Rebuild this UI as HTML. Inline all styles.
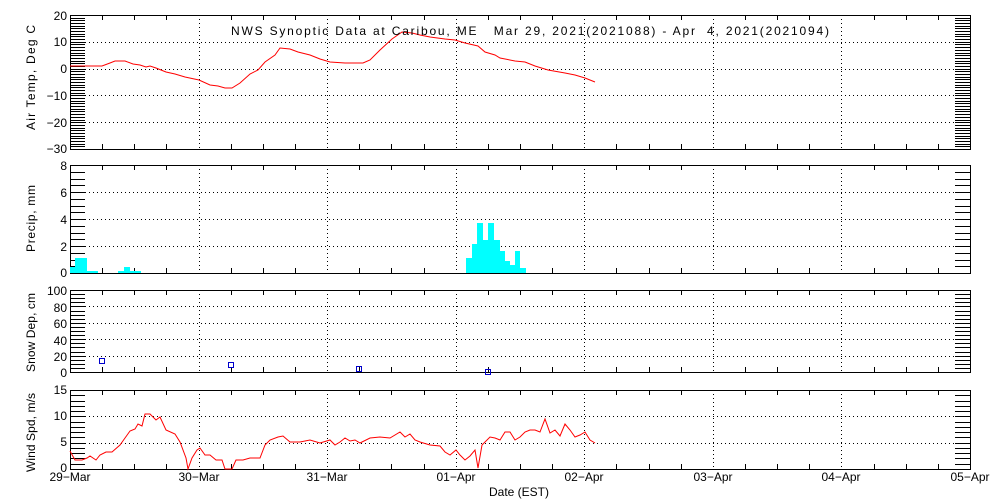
<!DOCTYPE html>
<html><head><meta charset="utf-8"><style>
html,body{margin:0;padding:0;background:#fff;width:1000px;height:500px;overflow:hidden}
svg text{font-family:"Liberation Sans",sans-serif;font-size:12px;fill:#000;white-space:pre}
</style></head><body>
<svg id="s" width="1000" height="500" xmlns="http://www.w3.org/2000/svg" shape-rendering="crispEdges">
<g id="g"></g>
<text x="231" y="35" font-size="13" textLength="598" lengthAdjust="spacing" xml:space="preserve">NWS Synoptic Data at Caribou, ME   Mar 29, 2021(2021088) - Apr  4, 2021(2021094)</text>
<text x="67" y="20" text-anchor="end">20</text>
<text x="67" y="46" text-anchor="end">10</text>
<text x="67" y="73" text-anchor="end">0</text>
<text x="67" y="100" text-anchor="end">−10</text>
<text x="67" y="127" text-anchor="end">−20</text>
<text x="67" y="153" text-anchor="end">−30</text>
<text x="67" y="170" text-anchor="end">8</text>
<text x="67" y="197" text-anchor="end">6</text>
<text x="67" y="224" text-anchor="end">4</text>
<text x="67" y="251" text-anchor="end">2</text>
<text x="67" y="277" text-anchor="end">0</text>
<text x="67" y="295" text-anchor="end">100</text>
<text x="67" y="312" text-anchor="end">80</text>
<text x="67" y="328" text-anchor="end">60</text>
<text x="67" y="345" text-anchor="end">40</text>
<text x="67" y="361" text-anchor="end">20</text>
<text x="67" y="377" text-anchor="end">0</text>
<text x="67" y="394" text-anchor="end">15</text>
<text x="67" y="420" text-anchor="end">10</text>
<text x="67" y="446" text-anchor="end">5</text>
<text x="67" y="472" text-anchor="end">0</text>
<text transform="translate(35,130) rotate(-90)" textLength="105" lengthAdjust="spacing">Air Temp, Deg C</text>
<text transform="translate(35,252) rotate(-90)" textLength="67" lengthAdjust="spacing">Precip, mm</text>
<text transform="translate(35,372) rotate(-90)" textLength="79" lengthAdjust="spacing">Snow Dep, cm</text>
<text transform="translate(35,472) rotate(-90)" textLength="79" lengthAdjust="spacing">Wind Spd, m/s</text>
<g text-anchor="middle">
<text x="70" y="481">29−Mar</text><text x="199" y="481">30−Mar</text><text x="327" y="481">31−Mar</text>
<text x="456" y="481">01−Apr</text><text x="584" y="481">02−Apr</text><text x="713" y="481">03−Apr</text>
<text x="841" y="481">04−Apr</text><text x="970" y="481">05−Apr</text>
</g>
<text x="489" y="496" textLength="60" lengthAdjust="spacing">Date (EST)</text>
</svg>
<script>
var g=document.getElementById('g'),h='';
function L(x1,y1,x2,y2,st){h+='<line x1="'+x1+'" y1="'+y1+'" x2="'+x2+'" y2="'+y2+'" stroke="#000" stroke-width="1" '+(st||'')+'/>';}
var days=[70,198.6,327.1,455.7,584.3,712.9,841.4,970];
var panels=[[15,149,50,[15+10*2.68,15+20*2.68,15+30*2.68,15+40*2.68]],[165,273,16,[192,219,246]],[290,372,20,[306.4,322.8,339.2,355.6]],[390,469,15,[416.3,442.7]]];
panels.forEach(function(p){
 var t=p[0],b=p[1];
 for(var i=0;i<=p[2];i++){var y=Math.round(t+(b-t)*i/p[2])+.5;L(70,y,85,y);L(955,y,970,y);}
 p[3].forEach(function(y){y=Math.round(y)+.5;L(85,y,955,y,'stroke-dasharray="1,3"');});
 for(var d=1;d<7;d++){var x=Math.round(days[d])+.5;L(x,t,x,b,'stroke-dasharray="1,3"');}
 for(var q=1;q<28;q++){var x=Math.round(70+900*q/28)+.5;if(q%4){L(x,t,x,t+5);L(x,b,x,b-5);}}
 h+='<rect x="70.5" y="'+(t+.5)+'" width="900" height="'+(b-t)+'" fill="none" stroke="#000"/>';
});
function P(pts){return '<polyline fill="none" stroke="#f00" stroke-width="1" shape-rendering="auto" points="'+pts.map(function(p){return p.join(',')}).join(' ')+'"/>';}
var temp=[[70,66],[102,66],[110,63],[115,61],[125,61],[133,64],[140,65],[146,67],[150,66],[156,68],[166,72],[175,74],[185,77],[199,80],[210,85],[218,86],[225,88],[232,88],[240,83],[250,74],[258,70],[265,62],[275,55],[280,48],[290,49],[298,52],[310,55],[320,59],[330,62],[345,63],[363,63],[370,60],[380,50],[392,39],[402,32],[412,33],[420,35],[430,37],[445,39],[455,40],[465,43],[478,46],[485,52],[495,55],[500,58],[515,61],[525,62],[535,66],[548,70],[565,73],[575,75],[585,78],[595,82]];
var bars=[[70,75,267],[75,87,258],[87,98,271],[118,124,271],[124,130,267],[130,141,271],[466,472,258],[472,477,244],[477,483,223],[483,488,240],[488,494,223],[494,500,240],[500,505,251],[505,510,261],[510,515,265],[515,520,251],[520,526,268]];
bars.forEach(function(b){h+='<rect x="'+b[0]+'" y="'+b[2]+'" width="'+(b[1]-b[0])+'" height="'+(273-b[2])+'" fill="#00ffff"/>';});
[[102,362],[231,366],[359,370],[488,373]].forEach(function(s){h+='<rect x="'+(s[0]-2.5)+'" y="'+(s[1]-3.5)+'" width="5" height="5" fill="none" stroke="#0000cc"/>';});
var wind=[[70,451],[75,460],[82,460],[87,458],[90,456],[96,460],[100,455],[106,452],[112,452],[120,445],[125,438],[130,431],[135,429],[138,424],[142,426],[145,414],[150,414],[156,420],[160,417],[166,430],[175,434],[180,442],[186,458],[188,469],[192,458],[197,450],[200,448],[205,455],[210,455],[216,460],[222,460],[225,469],[232,469],[236,460],[243,460],[250,458],[260,458],[265,445],[270,440],[278,437],[283,436],[290,442],[300,442],[310,440],[320,443],[330,440],[335,445],[340,442],[345,438],[350,441],[355,440],[360,443],[370,438],[380,437],[390,438],[400,432],[405,437],[410,434],[415,440],[420,442],[430,445],[440,446],[445,452],[450,455],[456,450],[460,455],[465,460],[470,456],[475,450],[478,468],[482,445],[490,437],[495,438],[500,440],[505,432],[510,432],[515,440],[520,437],[525,432],[530,430],[535,430],[540,432],[545,419],[550,433],[555,430],[560,436],[565,424],[570,430],[575,437],[580,435],[585,432],[590,440],[595,443]];
h+=P(temp)+P(wind);
g.innerHTML=h;
</script>
</body></html>
